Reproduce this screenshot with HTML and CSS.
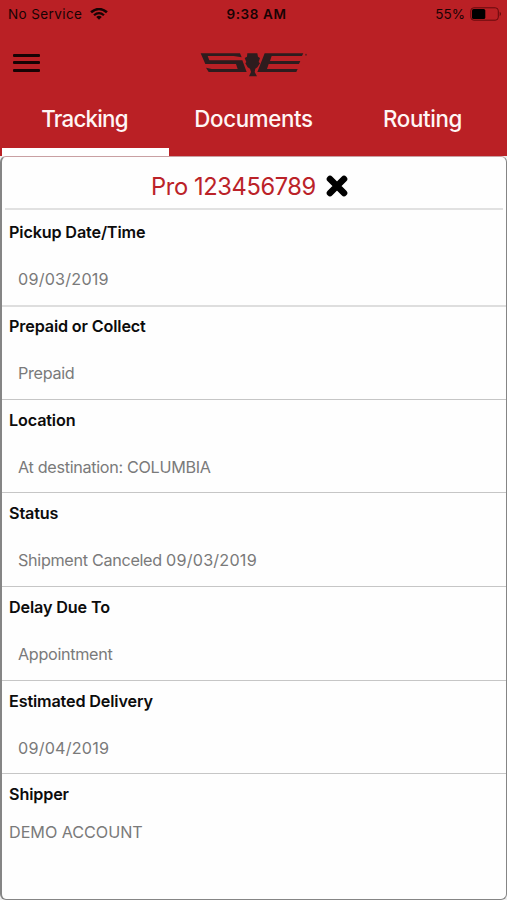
FILE: index.html
```html
<!DOCTYPE html>
<html lang="en">
<head>
    <meta charset="UTF-8">
    <meta name="viewport" content="width=device-width, initial-scale=1.0">
    <title>Tracking</title>
    <link rel="stylesheet" href="styles.css">
</head>
<body>

    <header class="header">
        <div class="status-bar">
            <div class="carrier">
                <span>No Service</span>
                <svg class="wifi" width="18" height="12" viewBox="0 0 17 12" preserveAspectRatio="none">
                    <path d="M1 4.3 Q8.5 -2.2 16 4.3" fill="none" stroke="#170304" stroke-width="2.5"/>
                    <path d="M3.8 7.2 Q8.5 3 13.2 7.2" fill="none" stroke="#170304" stroke-width="2.2"/>
                    <path d="M5.9 9 Q8.5 6.7 11.1 9 L8.5 11.7 Z" fill="#170304"/>
                </svg>
            </div>
            <div class="clock">9:38 AM</div>
            <div class="power">
                <span>55%</span>
                <svg width="32" height="14" viewBox="0 0 32 14">
                    <rect x="0.8" y="0.8" width="27.5" height="12.4" rx="3" fill="none" stroke="#64090c" stroke-width="1"/>
                    <rect x="2" y="2" width="13.3" height="10" rx="1.6" fill="#000"/>
                    <path d="M29.7 4.8 Q32.3 7 29.7 9.2 Z" fill="#64090c"/>
                </svg>
            </div>
        </div>

        <div class="nav-bar">
            <button class="menu-button" aria-label="Menu">
                <span></span>
                <span></span>
                <span></span>
            </button>
            <svg class="logo" width="108" height="25" viewBox="0 0 324 75">
                <g fill="#2d1c1e">
                    <path d="M2 4 H120 L125 16 L101 12 H23 L28 25 H127 L140 60 H26 L18 47 L35 51 H113 L108 36 H16 Z"/>
                    <path d="M142 4 H172 L174 14 L180 18 L176 30 L180 34 L172 46 L166 50 L164 60 L171 73 H147 L153 60 L150 50 L143 46 L136 34 L139 30 L134 18 L141 14 Z"/>
                    <path d="M194 4 H310 L306 12 H215 L210 27 H301 L297 36 H206 L201 51 H293 L289 60 H172 Z"/>
                    <circle cx="318" cy="8" r="3" opacity="0.6"/>
                </g>
            </svg>
        </div>

        <nav class="tabs">
            <div class="tab active">Tracking</div>
            <div class="tab">Documents</div>
            <div class="tab">Routing</div>
        </nav>
    </header>

    <main class="card">
        <div class="card-title">
            <h1>Pro 123456789</h1>
            <svg class="close" width="22" height="22" viewBox="0 0 22 22">
                <path d="M4 4 L18 18 M18 4 L4 18" stroke="#000" stroke-width="5"/>
                <path d="M4 4 L18 18 M18 4 L4 18" stroke="#000" stroke-width="6.6" stroke-linecap="round"/>
            </svg>
        </div>
        <div class="row first">
            <h2>Pickup Date/Time</h2>
            <p class="date">09/03/2019</p>
        </div>
        <div class="row">
            <h2>Prepaid or Collect</h2>
            <p>Prepaid</p>
        </div>
        <div class="row">
            <h2>Location</h2>
            <p>At destination: COLUMBIA</p>
        </div>
        <div class="row">
            <h2>Status</h2>
            <p>Shipment Canceled <span class="date">09/03/2019</span></p>
        </div>
        <div class="row">
            <h2>Delay Due To</h2>
            <p>Appointment</p>
        </div>
        <div class="row">
            <h2>Estimated Delivery</h2>
            <p class="date">09/04/2019</p>
        </div>
        <div class="row shipper">
            <h2>Shipper</h2>
            <p>DEMO ACCOUNT</p>
        </div>
    </main>

</body>
</html>
```

FILE: styles.css
```css
* {
    box-sizing: border-box;
}

body {
    margin: 0;
    height: 900px;
    display: flex;
    flex-direction: column;
    overflow: hidden;
    font-family: Inter, "Liberation Sans", sans-serif;
    background-color: #eee;
}

.header {
    height: 156px;
    color: #170304;
    background-color: #ba2025;
}

.status-bar {
    display: grid;
    grid-template-columns: 1fr auto 1fr;
    align-items: center;
    height: 27px;
    padding: 0 5px 0 8px;
    font-size: 13.5px;
}

.carrier, .power {
    display: flex;
    align-items: center;
    gap: 8px;
    letter-spacing: 0.4px;
}

.power {
    justify-content: flex-end;
    gap: 5px;
    letter-spacing: 0;
}

.clock {
    padding-left: 3px;
    font-weight: 600;
    letter-spacing: 0.6px;
}

.nav-bar {
    display: grid;
    grid-template-columns: 1fr auto 1fr;
    align-items: center;
    height: 71px;
    padding: 0 12px 0 13px;
}

.menu-button {
    display: flex;
    flex-direction: column;
    gap: 4.5px;
    width: 27px;
    padding: 0;
    border: none;
    background: none;
}

.menu-button span {
    height: 3px;
    border-radius: 1px;
    background-color: #170304;
}

.logo {
    margin-top: 4px;
}

.tabs {
    display: grid;
    grid-template-columns: repeat(3, 1fr);
    height: 58px;
    color: #fff6f5;
    font-size: 22.3px;
    font-weight: 500;
    letter-spacing: -0.35px;
    text-align: center;
}

.tab {
    line-height: 41px;
}

.tab.active {
    margin-left: 2px;
    padding-right: 2px;
    border-bottom: 8px solid #fff;
    letter-spacing: -0.75px;
}

.card {
    flex: 1;
    border: 1px solid #858585;
    border-left-width: 2px;
    border-top-color: #c9a0a3;
    border-radius: 6px;
    background-color: #fefefe;
}

.card-title {
    display: flex;
    align-items: center;
    justify-content: center;
    gap: 10px;
    height: 53px;
    margin: 0 3px;
    padding: 7px 9px 0 0;
    border-bottom: 2px solid #e1e1e1;
}

h1 {
    margin: 0;
    color: #bb2228;
    font-size: 23.7px;
    font-weight: 400;
    letter-spacing: -0.4px;
}

.row {
    height: 93.7px;
    padding: 9px 7px 0;
    border-bottom: 1px solid #c6c6c6;
}

h2 {
    margin: 0;
    color: #0c0c0c;
    font-size: 16.2px;
    font-weight: 600;
    letter-spacing: -0.15px;
    line-height: 22px;
}

.row p {
    margin: 25px 0 0 9px;
    color: #7a7a7a;
    font-size: 16.2px;
    letter-spacing: -0.32px;
    line-height: 22px;
}

.row .date {
    letter-spacing: 0.2px;
}

.row.first {
    height: 97px;
    padding-top: 11px;
    border-bottom: 2px solid #dedede;
}

.first + .row {
    height: 92.7px;
    padding-top: 8px;
}

.row.shipper {
    border-bottom: none;
}

.row.shipper p {
    margin: 16px 0 0;
    letter-spacing: -0.05px;
}
```
